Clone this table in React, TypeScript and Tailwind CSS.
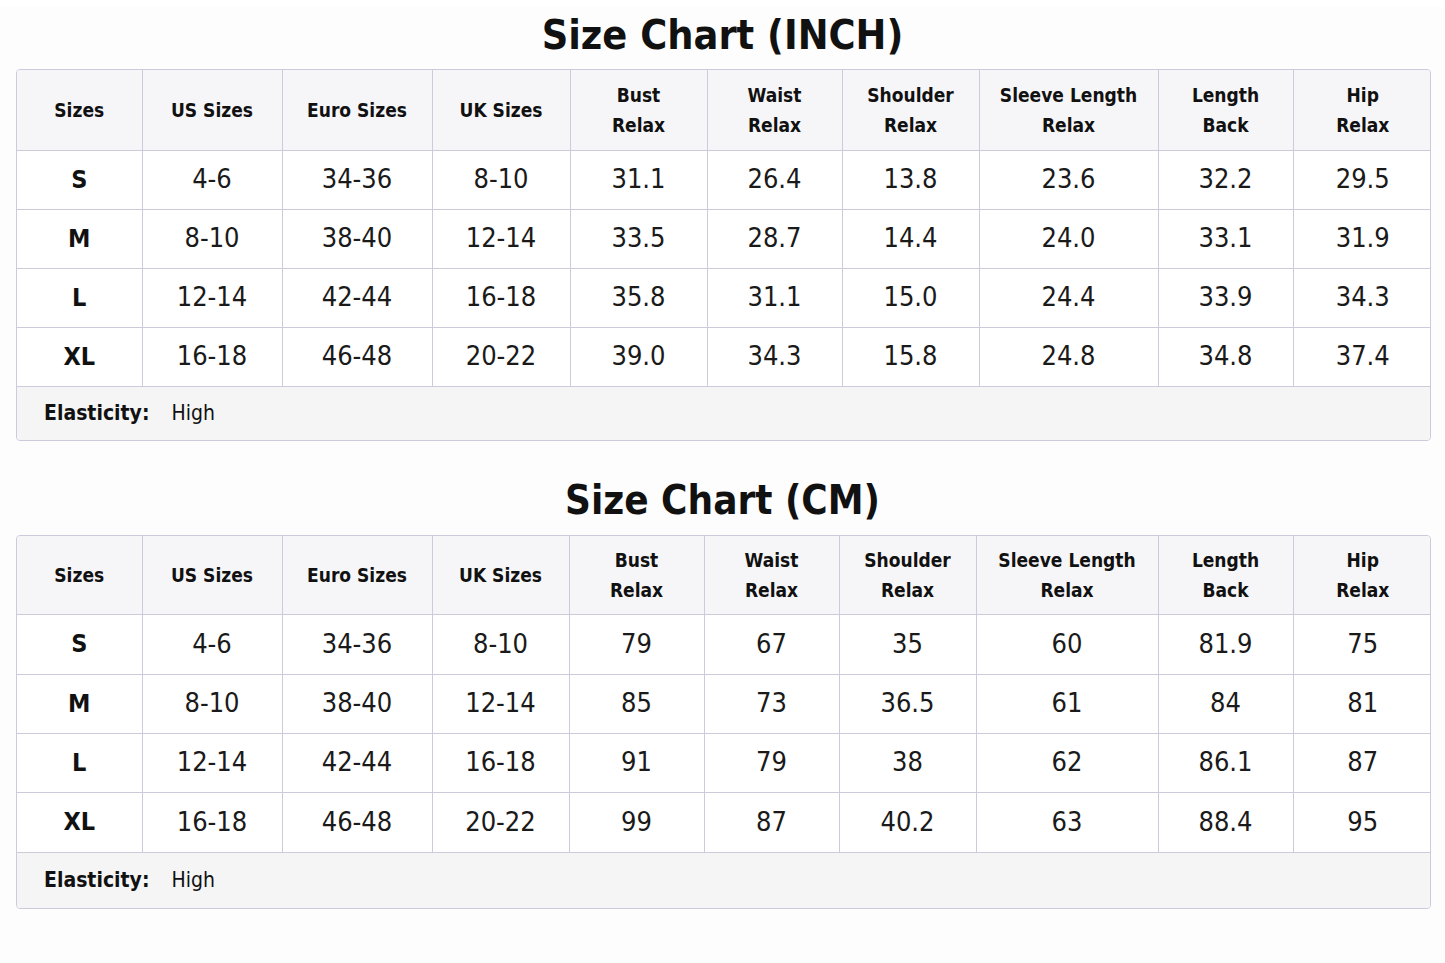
import React from "react";

type Chart = {
  title: string;
  titleSize: string;
  cols: number[];
  headerH: string;
  rowH: string[];
  footH: string;
  rows: string[][];
};

const headers: string[][] = [
  ["Sizes"],
  ["US Sizes"],
  ["Euro Sizes"],
  ["UK Sizes"],
  ["Bust", "Relax"],
  ["Waist", "Relax"],
  ["Shoulder", "Relax"],
  ["Sleeve Length", "Relax"],
  ["Length", "Back"],
  ["Hip", "Relax"],
];

const charts: Chart[] = [
  {
    title: "Size Chart (INCH)",
    titleSize: "text-[41px]",
    cols: [125, 140, 150, 138, 137, 135, 137, 179, 135, 139],
    headerH: "h-[80px]",
    rowH: ["h-[59px]", "h-[59px]", "h-[59px]", "h-[59px]"],
    footH: "h-[54px]",
    rows: [
      ["S", "4-6", "34-36", "8-10", "31.1", "26.4", "13.8", "23.6", "32.2", "29.5"],
      ["M", "8-10", "38-40", "12-14", "33.5", "28.7", "14.4", "24.0", "33.1", "31.9"],
      ["L", "12-14", "42-44", "16-18", "35.8", "31.1", "15.0", "24.4", "33.9", "34.3"],
      ["XL", "16-18", "46-48", "20-22", "39.0", "34.3", "15.8", "24.8", "34.8", "37.4"],
    ],
  },
  {
    title: "Size Chart (CM)",
    titleSize: "text-[40px]",
    cols: [125, 140, 150, 137, 135, 135, 137, 182, 135, 139],
    headerH: "h-[78px]",
    rowH: ["h-[60px]", "h-[59px]", "h-[59px]", "h-[60px]"],
    footH: "h-[56px]",
    rows: [
      ["S", "4-6", "34-36", "8-10", "79", "67", "35", "60", "81.9", "75"],
      ["M", "8-10", "38-40", "12-14", "85", "73", "36.5", "61", "84", "81"],
      ["L", "12-14", "42-44", "16-18", "91", "79", "38", "62", "86.1", "87"],
      ["XL", "16-18", "46-48", "20-22", "99", "87", "40.2", "63", "88.4", "95"],
    ],
  },
];

function SizeTable({ chart }: { chart: Chart }) {
  return (
    <div className="ml-[16px] mr-[14px] rounded-[4px] border border-[#cbcbdc] overflow-hidden">
      <table className="w-full table-fixed border-collapse">
        <colgroup>
          {chart.cols.map((w, i) => (
            <col key={i} style={{ width: w }} />
          ))}
        </colgroup>
        <thead>
          <tr className={`${chart.headerH} bg-[#f6f6f8]`}>
            {headers.map((h, i) => (
              <th
                key={i}
                className={`p-0 text-center align-middle text-[19px] leading-[30px] font-bold text-[#111] border-b border-[#cbcbdc] ${
                  i < 9 ? "border-r" : ""
                }`}
              >
                {h.map((line) => (
                  <div key={line}>{line}</div>
                ))}
              </th>
            ))}
          </tr>
        </thead>
        <tbody>
          {chart.rows.map((row, r) => (
            <tr key={r} className={`${chart.rowH[r]} bg-white`}>
              {row.map((cell, i) => (
                <td
                  key={i}
                  className={`p-0 text-center align-middle border-b border-[#cbcbdc] ${
                    i < 9 ? "border-r" : ""
                  } ${i === 0 ? "font-bold text-[25px] text-[#111]" : "text-[27px] text-[#1a1a1a]"}`}
                >
                  {cell}
                </td>
              ))}
            </tr>
          ))}
          <tr className={`${chart.footH} bg-[#f5f5f6]`}>
            <td colSpan={10} className="p-0 pl-[27px] align-middle text-[21px] text-[#111]">
              <span className="font-bold">Elasticity:</span>
              <span className="ml-[22px]">High</span>
            </td>
          </tr>
        </tbody>
      </table>
    </div>
  );
}

export default function App() {
  return (
    <div
      className="w-[1445px] h-[963px] bg-[#fdfdfd] text-[#111]"
      style={{ fontFamily: '"DejaVu Sans Condensed", "Liberation Sans Narrow", "Liberation Sans", sans-serif' }}
    >
      <h1 className={`h-[56px] mt-[7px] mb-[6px] text-center ${charts[0].titleSize} leading-[56px] font-bold`}>
        {charts[0].title}
      </h1>
      <SizeTable chart={charts[0]} />
      <h1 className={`h-[56px] mt-[31px] mb-[7px] text-center ${charts[1].titleSize} leading-[56px] font-bold`}>
        {charts[1].title}
      </h1>
      <SizeTable chart={charts[1]} />
    </div>
  );
}
